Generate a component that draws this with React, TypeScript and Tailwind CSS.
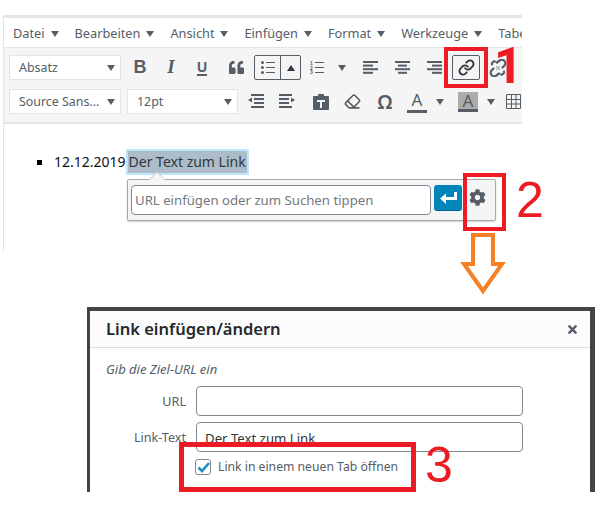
import type { ReactNode } from "react"
import { Link, Eraser } from "lucide-react"
import { FaCog, FaQuoteLeft, FaTimes } from "react-icons/fa"

const ui = "font-['Noto_Sans',sans-serif]"

function Caret({ className = "" }: { className?: string }) {
  return (
    <svg width="8" height="6" viewBox="0 0 8 6" className={`shrink-0 ${className}`}>
      <path d="M0 0h8L4 6z" fill="#555d66" />
    </svg>
  )
}

function MenuItem({ label }: { label: string }) {
  return (
    <div className="flex shrink-0 items-center gap-[6px]">
      <span>{label}</span>
      <Caret />
    </div>
  )
}

function Select({ label, className = "" }: { label: string; className?: string }) {
  return (
    <div
      className={`flex h-[25px] shrink-0 items-center justify-between border border-[#e2e4e7] bg-white pl-[9px] pr-[5px] text-[12.4px] text-[#555d66] ${className}`}
    >
      <span className="pt-[2px]">{label}</span>
      <Caret />
    </div>
  )
}

function Slot({ className = "", children }: { className?: string; children: ReactNode }) {
  return (
    <div className={`flex h-[25px] shrink-0 items-center justify-center text-[#555d66] ${className}`}>
      {children}
    </div>
  )
}

function AlignIcon({ lines }: { lines: [number, number][] }) {
  return (
    <svg width="15" height="13" viewBox="0 0 15 13" fill="#555d66">
      {lines.map(([x, w], i) => (
        <rect key={i} x={x} y={i * 3.6} width={w} height="2" />
      ))}
    </svg>
  )
}

function IndentIcon({ flip }: { flip?: boolean }) {
  return (
    <svg width="16" height="15" viewBox="0 0 16 15" fill="#555d66" className={flip ? "-scale-x-100" : ""}>
      <rect x="3" y="0" width="13" height="2" />
      <rect x="6" y="4" width="10" height="2" />
      <rect x="6" y="8" width="10" height="2" />
      <rect x="3" y="12" width="13" height="2" />
      <path d="M4 3.500v5L0 6z" />
    </svg>
  )
}

function Toolbar() {
  return (
    <div className="flex flex-col gap-[9px] border-b-2 border-[#e5e5e5] bg-[#f5f5f5] pb-[8px] pl-[5px] pt-[7px]">
      <div className="flex items-center">
        <Select label="Absatz" className="w-[112px]" />
        <Slot className="ml-[4px] w-[30px] font-['Liberation_Sans',sans-serif] text-[18px] font-bold">B</Slot>
        <Slot className="ml-[1px] w-[30px] font-['Liberation_Serif',serif] text-[19px] font-bold italic">I</Slot>
        <Slot className="ml-[1px] w-[30px]">
          <span className="border-b-2 border-[#555d66] font-['Liberation_Sans',sans-serif] text-[14px] font-bold leading-[14px]">U</span>
        </Slot>
        <Slot className="ml-[4px] w-[30px]">
          <FaQuoteLeft size={15} />
        </Slot>
        <div className="ml-[3px] flex h-[25px] w-[47px] shrink-0 rounded-[2px] border border-[#555d66]">
          <div className="flex w-[26px] items-center justify-center border-r border-[#555d66]">
            <svg width="14" height="13" viewBox="0 0 14 13" fill="#555d66">
              <circle cx="1.500" cy="1.500" r="1.500" />
              <circle cx="1.500" cy="6.500" r="1.500" />
              <circle cx="1.500" cy="11.500" r="1.500" />
              <rect x="5" y="1" width="9" height="1" />
              <rect x="5" y="6" width="9" height="1" />
              <rect x="5" y="11" width="9" height="1" />
            </svg>
          </div>
          <div className="flex flex-1 items-center justify-center">
            <svg width="8" height="6" viewBox="0 0 8 6">
              <path d="M0 6h8L4 0z" fill="#32373c" />
            </svg>
          </div>
        </div>
        <Slot className="ml-[4px] w-[24px]">
          <svg width="14" height="13" viewBox="0 0 14 13" fill="#555d66">
            <text x="0" y="4" fontSize="5" fontWeight="700" fontFamily="Liberation Sans">1</text>
            <text x="0" y="8.500" fontSize="5" fontWeight="700" fontFamily="Liberation Sans">2</text>
            <text x="0" y="13" fontSize="5" fontWeight="700" fontFamily="Liberation Sans">3</text>
            <rect x="5" y="1" width="9" height="1" />
            <rect x="5" y="6" width="9" height="1" />
            <rect x="5" y="11" width="9" height="1" />
          </svg>
        </Slot>
        <Caret className="ml-[9px]" />
        <Slot className="ml-[8px] w-[32px]">
          <AlignIcon lines={[[0, 15], [0, 10], [0, 15], [0, 10]]} />
        </Slot>
        <Slot className="w-[32px]">
          <AlignIcon lines={[[0, 15], [3, 9], [0, 15], [3, 9]]} />
        </Slot>
        <Slot className="w-[32px]">
          <AlignIcon lines={[[0, 15], [5, 10], [0, 15], [5, 10]]} />
        </Slot>
        <Slot className="ml-[2px] w-[28px] rounded-[2px] border border-[#555d66] bg-[#f5f5f5]">
          <Link size={17} strokeWidth={2.6} color="#32373c" />
        </Slot>
        <Slot className="ml-[4px] w-[28px]">
          <svg width="18" height="18" viewBox="0 0 18 18" fill="none" stroke="#555d66" strokeWidth="2.200" strokeLinecap="round">
            <path d="M8 3.500 10 2a3.500 3.500 0 0 1 5.500 4.500l-2 2" />
            <path d="M10 14.500 8 16a3.500 3.500 0 0 1-5.500-4.500l2-2" />
            <path d="M3 5.500a2.500 2.500 0 0 1 3-3M15 12.500a2.500 2.500 0 0 1-3 3" />
            <path d="M7.500 7.500 9 9l1.500 1.500M10.500 7.500 9.800 8.200M7.500 10.500l.7-.7" stroke="#a9aeb3" strokeWidth="1.200" />
          </svg>
        </Slot>
      </div>
      <div className="flex items-center">
        <Select label="Source Sans..." className="w-[112px]" />
        <Select label="12pt" className="ml-[6px] w-[111px]" />
        <Slot className="ml-[4px] w-[28px]">
          <IndentIcon />
        </Slot>
        <Slot className="ml-[3px] w-[28px]">
          <IndentIcon flip />
        </Slot>
        <Slot className="ml-[6px] w-[28px]">
          <svg width="16" height="16" viewBox="0 0 16 16" fill="#555d66">
            <path fillRule="evenodd" d="M1 2h4V1a1 1 0 0 1 1-1h4a1 1 0 0 1 1 1v1h4a1 1 0 0 1 1 1v12a1 1 0 0 1-1 1H1a1 1 0 0 1-1-1V3a1 1 0 0 1 1-1zm3 4v2h3v6h2V8h3V6z" />
          </svg>
        </Slot>
        <Slot className="ml-[3px] w-[28px]">
          <Eraser size={17} strokeWidth={2.2} />
        </Slot>
        <Slot className={`ml-[5px] w-[28px] ${ui} text-[20px] font-semibold`}>Ω</Slot>
        <Slot className="ml-[4px] w-[28px]">
          <span className={`w-[20px] border-b-[3px] border-[#555d66] text-center ${ui} text-[17px] leading-[20px]`}>A</span>
        </Slot>
        <Caret className="ml-[5px]" />
        <span className={`ml-[14px] h-[20px] w-[20px] shrink-0 border-b-[3px] border-[#555d66] bg-[#acacac] text-center ${ui} text-[17px] leading-[18px] text-[#555d66]`}>A</span>
        <Caret className="ml-[9px]" />
        <Slot className="ml-[11px] w-[24px] justify-start">
          <svg width="15" height="15" viewBox="0 0 15 15" fill="none" stroke="#555d66">
            <path d="M.5.5h14v14H.5zM5.500.5v14M10 .5v14M.5 5.500h14M.5 10h14" />
          </svg>
        </Slot>
      </div>
    </div>
  )
}

function LinkPopover() {
  return (
    <div className="absolute left-[123px] top-[161px] flex h-[42px] w-[369px] items-start rounded-[2px] border border-[#a8a8a8] bg-[#f5f5f5] pl-[3px] pt-[5px] shadow-[0_1px_2px_rgba(0,0,0,0.2)]">
      <svg width="16" height="8" viewBox="0 0 16 8" className="absolute left-[21px] top-[-8px]">
        <path d="M0 8 8 0l8 8" fill="#f5f5f5" stroke="#c8c8c8" />
      </svg>
      <input
        readOnly
        placeholder="URL einfügen oder zum Suchen tippen"
        className="h-[30px] w-[300px] rounded-[4px] border border-[#7e8993] bg-white px-[3px] text-[13.2px] placeholder:text-[#72777c]"
      />
      <div className="ml-[3px] flex h-[26px] w-[28px] items-center justify-center rounded-[3px] border-b border-[#006799] bg-[#0085ba]">
        <svg width="17" height="12" viewBox="0 0 17 12" fill="white">
          <path d="M14 0h3v8H6v4L0 6.500 6 1.500V5h8z" />
        </svg>
      </div>
      <div className="ml-[7px] mt-[4px] text-[#555d66]">
        <FaCog size={17} />
      </div>
    </div>
  )
}

function Editor() {
  return (
    <div className={`relative ml-[3px] mt-[15px] h-[237px] w-[519px] overflow-hidden border-l border-t-[3px] border-[#e5e5e5] bg-white ${ui}`}>
      <div className="flex h-[30px] items-center gap-[16px] whitespace-nowrap border-b border-[#e5e5e5] pl-[9px] pt-[2px] text-[12.75px] text-[#555d66]">
        <MenuItem label="Datei" />
        <MenuItem label="Bearbeiten" />
        <MenuItem label="Ansicht" />
        <MenuItem label="Einfügen" />
        <MenuItem label="Format" />
        <MenuItem label="Werkzeuge" />
        <span>Tabe</span>
      </div>
      <Toolbar />
      <div className="flex items-center pl-[33px] pt-[27px] text-[14px] leading-[22px] text-[#111]">
        <span className="h-[5px] w-[5px] bg-black" />
        <span className="ml-[12px]">12.12.2019</span>
        <span className="ml-[2px] bg-[#acbcc8] px-[1px] text-[#32373c] outline-2 outline-[#bfe6ff]">Der Text zum Link</span>
      </div>
      <LinkPopover />
    </div>
  )
}

function Field({ label, value }: { label: string; value?: string }) {
  return (
    <div className="flex items-center">
      <span className="w-[96px] pt-[3px] text-right text-[12.6px] text-[#555d66]">{label}</span>
      <input
        readOnly
        value={value ?? ""}
        className="ml-[10px] h-[30px] w-[327px] rounded-[4px] border border-[#7e8993] bg-white px-[8px] pt-[1px] text-[13.2px] text-[#32373c]"
      />
    </div>
  )
}

function LinkDialog() {
  return (
    <div className={`ml-[87px] mt-[55px] h-[185px] w-[508px] overflow-hidden border-l-[3px] border-r-[5px] border-t-4 border-[#444] bg-white ${ui}`}>
      <div className="flex h-[37px] items-center justify-between border-b border-[#dddddd] bg-[#fcfcfc] pl-[16px] pr-[11px]">
        <span className="pt-[1px] text-[16.5px] font-semibold text-[#23282d]">Link einfügen/ändern</span>
        <FaTimes size={13} color="#555d66" />
      </div>
      <p className="pl-[16px] pt-[12px] text-[13px] italic leading-[18px] text-[#555d66]">Gib die Ziel-URL ein</p>
      <div className="mt-[8px] flex flex-col gap-[6px]">
        <Field label="URL" />
        <Field label="Link-Text" value="Der Text zum Link" />
      </div>
      <div className="mt-[6px] flex items-center pl-[105px]">
        <div className="flex h-[16px] w-[16px] items-center justify-center rounded-[3px] border border-[#7e8993] bg-white">
          <svg width="13" height="11" viewBox="0 0 13 11" fill="none" stroke="#1e8cbe" strokeWidth="2.600">
            <path d="m1.500 5.500 3.500 3.500 7-8" />
          </svg>
        </div>
        <span className="ml-[7px] text-[12.2px] text-[#555d66]">Link in einem neuen Tab öffnen</span>
      </div>
    </div>
  )
}

export default function App() {
  return (
    <div className="relative h-[508px] w-[599px] overflow-hidden bg-white">
      <Editor />
      <LinkDialog />

      {/* annotations drawn over the screenshot */}
      <div className="absolute left-[444px] top-[47px] h-[41px] w-[44px] border-4 border-[#ed1c24]" />
      <div className="absolute left-[463px] top-[173px] h-[58px] w-[43px] border-4 border-[#ed1c24]" />
      <div className="absolute left-[179px] top-[442px] h-[50px] w-[237px] border-[5px] border-[#ed1c24]" />
      <span className="absolute left-[494px] top-[37px] font-['Roboto',sans-serif] text-[50px] font-bold leading-[58px] text-[#ed1c24]">1</span>
      <span className="absolute left-[516px] top-[171px] font-['Liberation_Sans',sans-serif] text-[50px] leading-[58px] text-[#ed1c24]">2</span>
      <span className="absolute left-[425px] top-[436px] font-['Liberation_Sans',sans-serif] text-[50px] leading-[58px] text-[#ed1c24]">3</span>
      <svg width="48" height="64" viewBox="0 0 48 64" className="absolute left-[459px] top-[232px]">
        <path d="M14 3h20v29h9L24 59 5 32h9z" fill="white" stroke="#f58025" strokeWidth="4" />
      </svg>
    </div>
  )
}
